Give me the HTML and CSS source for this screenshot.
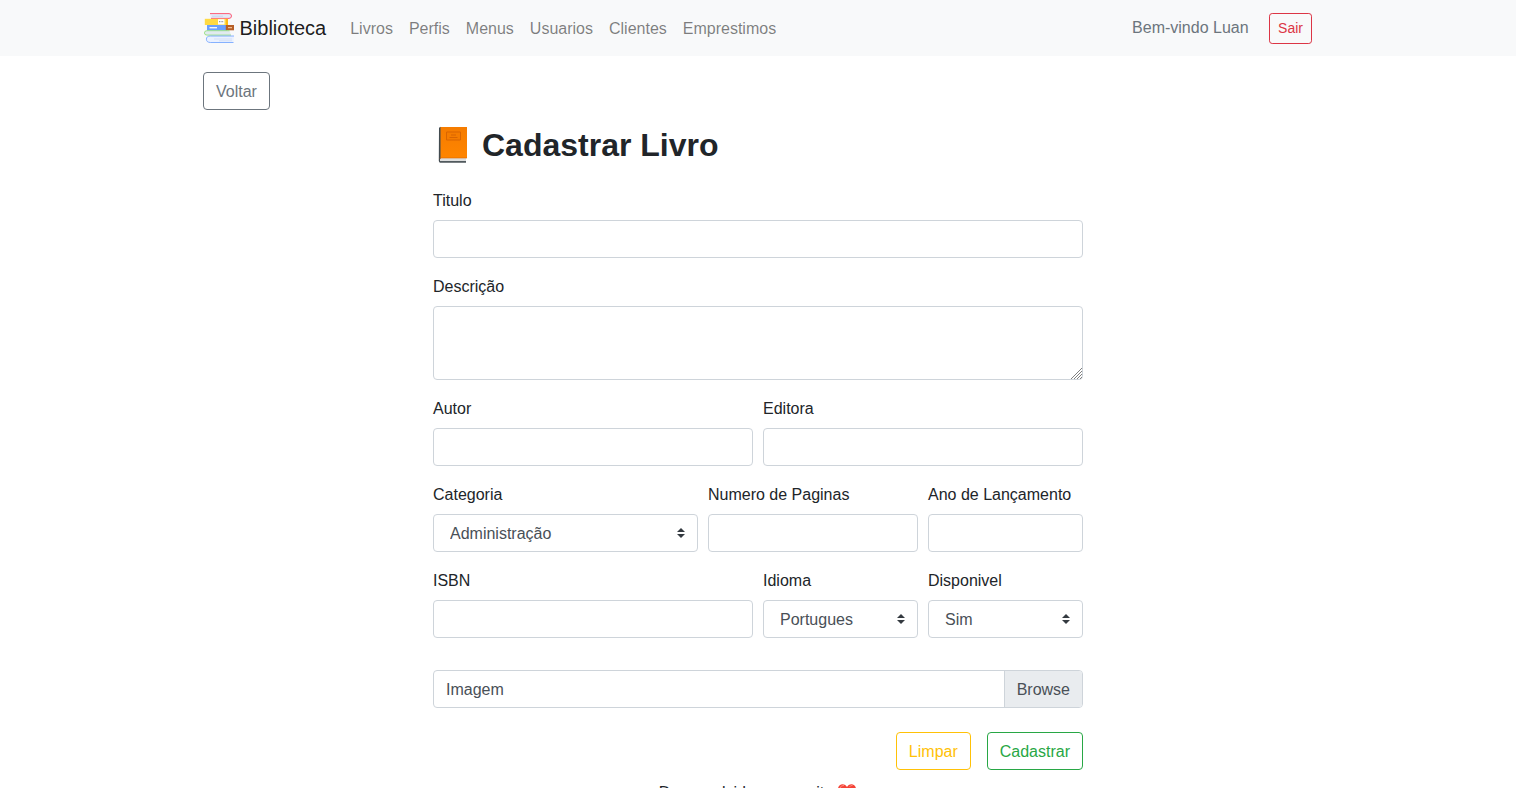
FILE: index.html
```html
<!DOCTYPE html>
<html lang="pt-br">
<head>
<meta charset="utf-8">
<title>Biblioteca</title>
<link rel="stylesheet" href="styles.css">
</head>
<body>
<nav class="navbar">
  <div class="container navbar-inner">
    <a class="brand">
      <svg class="logo" viewBox="0 0 30 30" aria-hidden="true">
        <path d="M6 .6H25Q27.500.6 27.500 3T25 5.400H7" fill="#e4eaf8" stroke="#ff4b67" stroke-width=".9"/>
        <path d="M8 3.200H19" stroke="#c9d6f0" fill="none"/>
        <path d="M.8 5.800H24V12H.8z" fill="#ffda44"/><path d="M22 6h2v6h-2z" fill="#ffbb16"/>
        <path d="M14 6.200h6.500v5.300H14z" fill="#fff"/><path d="M15 8.700h4.500" stroke="#777f8c" stroke-dasharray="1 .6"/>
        <path d="M3 12H23V17.500H3z" fill="#6aa0ff"/><path d="M5.500 14.700h7.500" stroke="#f2f6ff" stroke-width="1.400"/>
        <path d="M21.800 12H30v5.300h-8.200z" fill="#b65f27"/><path d="M24 14.700h4" stroke="#ffd0aa"/>
        <path d="M25.500 17.700H3Q.4 17.700.4 19.900T3 22.100H27" fill="#e1eaf0" stroke="#8ade70" stroke-width=".8"/>
        <path d="M30 23H6.500Q2.400 23 2.400 26.200T6.500 29.500H29.500" fill="#eaf1ff" stroke="#6aa0ff" stroke-width=".8"/>
        <path d="M10 26h18M15 27.800h13" stroke="#cbd9f3" stroke-width=".7"/>
      </svg>Biblioteca</a>
    <ul class="nav-links">
      <li>Livros</li><li>Perfis</li><li>Menus</li><li>Usuarios</li><li>Clientes</li><li>Emprestimos</li>
    </ul>
    <span class="welcome">Bem-vindo Luan</span>
    <button class="btn btn-sm btn-danger" type="button">Sair</button>
  </div>
</nav>
<main class="container">
  <button class="btn btn-secondary back" type="button">Voltar</button>
  <form class="book-form">
    <h1 class="title">
      <svg class="book" viewBox="0 0 30 38" aria-hidden="true">
        <path d="M1 2 3 .8V35H28v1.500H1.500L.8 35z" fill="#424b50"/>
        <path d="M2 32H28V35.500H2z" fill="#dedede"/>
        <path d="M2 35.200H28v1.200H2z" fill="#424b50"/>
        <path d="M1 2 2.500 1V32.500L1 35z" fill="#424b50"/>
        <path d="M2.500 1H29V32H2.500z" fill="url(#cover)"/>
        <path d="M2 33 2.500 32H29" fill="none" stroke="#d76500" stroke-width=".6"/>
        <path d="M8.500 6H22.500V14H8.500z" fill="#f57c00" stroke="#d96500"/>
        <path d="M13 9h5M11.500 11.500h8" stroke="#d96500"/>
        <defs><linearGradient id="cover" x2="0" y2="1"><stop stop-color="#f57c00"/><stop offset="1" stop-color="#ff8500"/></linearGradient></defs>
      </svg>Cadastrar Livro</h1>
    <div class="group"><label for="titulo">Titulo</label><input class="control" id="titulo"></div>
    <div class="group"><label for="descricao">Descrição</label>
      <div class="area"><textarea class="control" id="descricao"></textarea>
        <svg class="grip" viewBox="0 0 11 11" aria-hidden="true"><path d="M0 11 11 0M3 11l8-8M6 11l5-5M9 11l2-2"/></svg>
      </div></div>
    <div class="row halves">
      <div class="group"><label for="autor">Autor</label><input class="control" id="autor"></div>
      <div class="group"><label for="editora">Editora</label><input class="control" id="editora"></div>
    </div>
    <div class="row details">
      <div class="group"><label for="categoria">Categoria</label><select class="control select" id="categoria"><option>Administração</option></select></div>
      <div class="group"><label for="paginas">Numero de Paginas</label><input class="control" id="paginas"></div>
      <div class="group"><label for="ano">Ano de Lançamento</label><input class="control" id="ano"></div>
    </div>
    <div class="row edition">
      <div class="group"><label for="isbn">ISBN</label><input class="control" id="isbn"></div>
      <div class="group"><label for="idioma">Idioma</label><select class="control select" id="idioma"><option>Portugues</option></select></div>
      <div class="group"><label for="disponivel">Disponivel</label><select class="control select" id="disponivel"><option>Sim</option></select></div>
    </div>
    <div class="file"><span class="file-label">Imagem</span><span class="file-browse">Browse</span></div>
    <div class="actions">
      <button class="btn btn-warning" type="reset">Limpar</button>
      <button class="btn btn-success" type="button">Cadastrar</button>
    </div>
  </form>
</main>
<footer class="footer">Desenvolvido com muito
  <svg class="heart" viewBox="0 0 20 18" aria-hidden="true"><path d="M10 4C8.500-.2 1 0 1 6c0 5 6 8 9 11 3-3 9-6 9-11 0-6-7.500-6.200-9-2z" fill="#f44336"/><path d="M3 5q1-3 4-2.500M12.500 4q1-2 3-1.500" stroke="#ff8a80" fill="none"/></svg>
</footer>
</body>
</html>
```
FILE: styles.css
```css
*{box-sizing:border-box}
body{margin:0;height:788px;overflow:hidden;background:#fff;color:#212529;font:16px/24px "Liberation Sans",Arial,sans-serif}
.container{width:1140px;margin:0 auto;padding:0 15px}
.navbar{height:56px;background:#f8f9fa}
.navbar-inner{display:flex;align-items:center;height:56px}
.brand{display:flex;align-items:center;margin-right:16px;font-size:20px;line-height:30px;color:rgba(0,0,0,.9)}
.logo{width:30px;height:30px;margin:0 5.5px 0 1px}
.nav-links{display:flex;margin:0;padding:0;list-style:none;color:rgba(0,0,0,.5)}
.nav-links li{padding:9px 8px 7px}
.welcome{margin:0 20.5px 0 auto;color:#6c757d}
.btn{padding:7px 12px 5px;border:1px solid;border-radius:4px;background:transparent;font:inherit}
.btn-sm{margin-right:1px;padding:4px 8px;border-radius:3.2px;font-size:14px;line-height:21px}
.btn-danger{color:#dc3545}
.btn-secondary{color:#6c757d}
.btn-warning{color:#ffc107}
.btn-success{color:#28a745}
.back{display:block;margin-top:16px}
.book-form{width:650px;margin:16px auto 0}
.title{display:flex;align-items:center;height:38px;margin:0 0 24px;font-size:32px;line-height:38px}
.book{width:30px;height:38px;margin:0 14px 0 5px}
.group{margin-bottom:16px}
.group label{display:block;padding-top:1px;margin-bottom:7px}
.control{display:block;width:100%;height:38px;padding:7px 12px 5px;border:1px solid #ced4da;border-radius:4px;background:#fff;color:#495057;font:inherit;outline:0}
.area{position:relative}
.area .control{height:74px;resize:none}
.grip{position:absolute;right:1px;bottom:1px;width:11px;height:11px;fill:none;stroke:#808080;stroke-width:1}
.select{appearance:none;padding:7px 28px 5px 16px;background:#fff url("data:image/svg+xml,%3csvg xmlns='http://www.w3.org/2000/svg' width='4' height='5' viewBox='0 0 4 5'%3e%3cpath fill='%23343a40' d='M2 0L0 2h4zm0 5L0 3h4z'/%3e%3c/svg%3e") no-repeat right 12px center/8px 10px}
.row{display:grid;gap:10px}
.halves{grid-template-columns:320px 320px}
.details{grid-template-columns:265px 210px 155px}
.edition{grid-template-columns:320px 155px 155px}
.file{display:flex;height:38px;margin-top:16px;border:1px solid #ced4da;border-radius:4px;overflow:hidden;color:#495057}
.file-label{flex:1;padding:7px 12px 5px}
.file-browse{padding:7px 12px 5px;border-left:1px solid #ced4da;background:#e9ecef}
.actions{display:flex;justify-content:flex-end;gap:16px;margin-top:24px}
.footer{display:flex;justify-content:center;gap:4px;margin-top:11px}
.heart{width:20px;height:18px;margin-top:2px}
```
